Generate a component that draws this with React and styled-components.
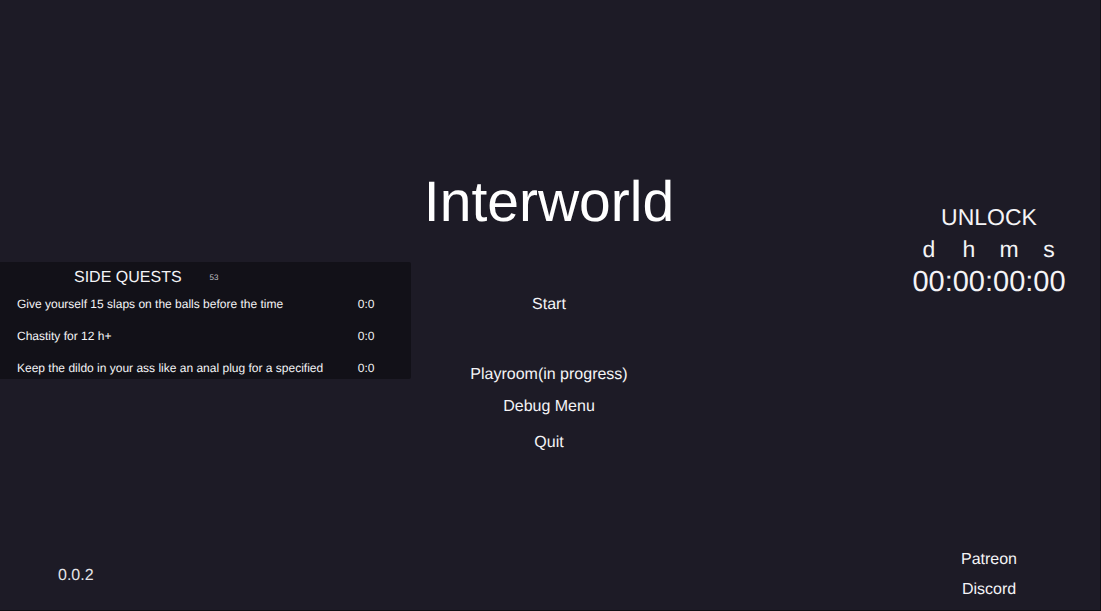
import React from 'react'
import styled, { createGlobalStyle } from 'styled-components'

const QUESTS = [
  { title: 'Give yourself 15 slaps on the balls before the time', time: '0:0' },
  { title: 'Chastity for 12 h+', time: '0:0' },
  { title: 'Keep the dildo in your ass like an anal plug for a specified', time: '0:0' }
]

const UNITS = ['d', 'h', 'm', 's']

const GlobalStyle = createGlobalStyle`
  * {
    box-sizing: border-box;
  }

  body {
    margin: 0;
    background: #1d1b26;
    color: #f4f4f6;
    font-family: 'Liberation Sans', Arial, sans-serif;
    font-size: 16px;
    line-height: 20px;
    text-rendering: geometricPrecision;
  }
`

const Screen = styled.main`
  display: grid;
  grid-template-columns: minmax(0, 3fr) minmax(0, 2fr) minmax(0, 3fr);
  min-height: 100vh;
  border: solid #0f0e14;
  border-width: 0 1px 1px 0;
`

const LeftColumn = styled.div`
  display: flex;
  flex-direction: column;
  justify-content: space-between;
  padding: 262px 2px 24px 0;
`

const Quests = styled.section`
  padding: 6px 36px 1px 17px;
  border-radius: 0 2px 2px 0;
  background: #121118;
`

const QuestsHeader = styled.header`
  display: flex;
  align-items: center;
  gap: 28px;
  padding-left: 57px;
`

const QuestsTitle = styled.h2`
  margin: 0;
  font-size: 16px;
  font-weight: 400;
`

const QuestsCount = styled.span`
  color: #c4c4ca;
  font-size: 8px;
`

const QuestList = styled.ul`
  display: flex;
  flex-direction: column;
  gap: 12px;
  margin: 6px 0 0;
  padding: 0;
  list-style: none;
  font-size: 12px;
`

const Quest = styled.li`
  display: flex;
  justify-content: space-between;
  white-space: nowrap;
`

const Version = styled.div`
  padding-left: 58px;
  color: #e4e4e8;
`

const Center = styled.div`
  display: flex;
  flex-direction: column;
  align-items: center;
  padding: 169px 2px 0 0;
`

const Title = styled.h1`
  margin: 0;
  color: #fff;
  font-size: 57px;
  font-weight: 400;
  line-height: 66px;
`

const Menu = styled.nav`
  display: flex;
  flex-direction: column;
  align-items: center;
  padding-top: 60px;
`

const MenuButton = styled.button`
  margin: 0 0 ${({ $gap }) => $gap || 0}px;
  padding: 0;
  border: 0;
  background: none;
  color: inherit;
  font: inherit;
  text-rendering: inherit;
  white-space: nowrap;
  cursor: pointer;
`

const RightColumn = styled.div`
  display: flex;
  flex-direction: column;
  align-items: flex-end;
  justify-content: space-between;
  padding: 201px 31px 10px 0;
`

const Unlock = styled.section`
  display: flex;
  flex-direction: column;
  align-items: center;
  font-size: 23px;
  line-height: 32px;
`

const UnlockTitle = styled.h2`
  margin: 0;
  font-size: inherit;
  font-weight: 400;
`

const Units = styled.div`
  display: grid;
  grid-template-columns: repeat(4, 40px);
  justify-items: center;
`

const Timer = styled.div`
  font-size: 29px;
  line-height: 34px;
`

const Links = styled.nav`
  display: flex;
  flex-direction: column;
  align-items: center;
  gap: 10px;
  width: 160px;
`

const Link = styled.a`
  color: inherit;
  text-decoration: none;
`

const SideQuests = ({ quests }) => (
  <Quests>
    <QuestsHeader>
      <QuestsTitle>SIDE QUESTS</QuestsTitle>
      <QuestsCount>53</QuestsCount>
    </QuestsHeader>
    <QuestList>
      {quests.map(({ title, time }) => (
        <Quest key={title}>
          <span>{title}</span>
          <span>{time}</span>
        </Quest>
      ))}
    </QuestList>
  </Quests>
)

const App = () => (
  <>
    <GlobalStyle />
    <Screen>
      <LeftColumn>
        <SideQuests quests={QUESTS} />
        <Version>0.0.2</Version>
      </LeftColumn>
      <Center>
        <Title>Interworld</Title>
        <Menu>
          <MenuButton $gap={50}>Start</MenuButton>
          <MenuButton $gap={12}>Playroom(in progress)</MenuButton>
          <MenuButton $gap={16}>Debug Menu</MenuButton>
          <MenuButton>Quit</MenuButton>
        </Menu>
      </Center>
      <RightColumn>
        <Unlock>
          <UnlockTitle>UNLOCK</UnlockTitle>
          <Units>
            {UNITS.map(unit => (
              <span key={unit}>{unit}</span>
            ))}
          </Units>
          <Timer>00:00:00:00</Timer>
        </Unlock>
        <Links>
          <Link href="#patreon">Patreon</Link>
          <Link href="#discord">Discord</Link>
        </Links>
      </RightColumn>
    </Screen>
  </>
)

export default App
